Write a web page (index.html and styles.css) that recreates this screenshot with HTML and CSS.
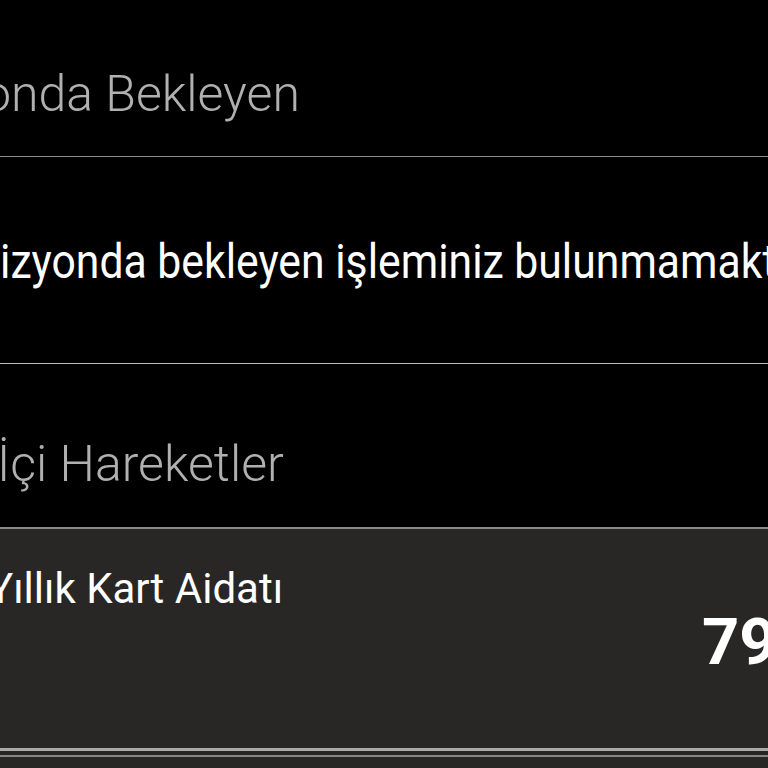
FILE: index.html
```html
<!DOCTYPE html>
<html lang="tr">
<head>
<meta charset="utf-8">
<link rel="stylesheet" href="styles.css">
</head>
<body>
<div class="screen">
  <section class="head head-first">
    <h2 class="head-title head-title-first">onda Bekleyen</h2>
  </section>
  <section class="message">
    <p class="message-text">izyonda bekleyen işleminiz bulunmamakt</p>
  </section>
  <section class="head head-second">
    <h2 class="head-title">İçi Hareketler</h2>
  </section>
  <section class="item">
    <div class="item-title">Yıllık Kart Aidatı</div>
    <div class="item-amount">79</div>
  </section>
  <div class="item-sep"></div>
  <section class="item item-next"></section>
</div>
</body>
</html>
```

FILE: styles.css
```css
html, body {
  margin: 0;
  padding: 0;
  background: #000;
}
body {
  width: 768px;
  height: 768px;
  overflow: hidden;
  font-family: Roboto, "Noto Sans", sans-serif;
}
.screen {
  display: flex;
  flex-direction: column;
  width: 768px;
}
.head {
  box-sizing: border-box;
  height: 157px;
  padding-top: 69px;
  border-bottom: 1px solid #8c8c8c;
}
.head-second {
  height: 165px;
  padding-top: 75px;
  border-bottom: 2px solid #8a8a8a;
}
.head-title {
  margin: 0 0 0 -3px;
  font-weight: 300;
  font-size: 50px;
  line-height: 50px;
  color: #b0b0b0;
  white-space: nowrap;
}
.head-title-first {
  margin-left: -17px;
}
.message {
  box-sizing: border-box;
  height: 207px;
  padding-top: 81px;
  border-bottom: 1px solid #bdbdbd;
}
.message-text {
  margin: 0;
  font-size: 48px;
  line-height: 48px;
  color: #fff;
  white-space: nowrap;
  transform: scaleX(0.89);
  transform-origin: left center;
}
.item {
  box-sizing: border-box;
  height: 219px;
  background: #282726;
  padding-top: 39px;
}
.item-title {
  margin-left: -12px;
  font-size: 42px;
  line-height: 42px;
  color: #fff;
  white-space: nowrap;
}
.item-amount {
  margin-top: 0;
  padding-left: 702px;
  font-weight: 700;
  font-size: 65px;
  line-height: 65px;
  color: #fff;
  white-space: nowrap;
}
.item-sep {
  height: 3px;
  background: #a9a9a9;
  border-bottom: 4px solid #262524;
}
.item-next {
  height: 40px;
  padding: 0;
  border-top: 2px solid #858585;
}
```
